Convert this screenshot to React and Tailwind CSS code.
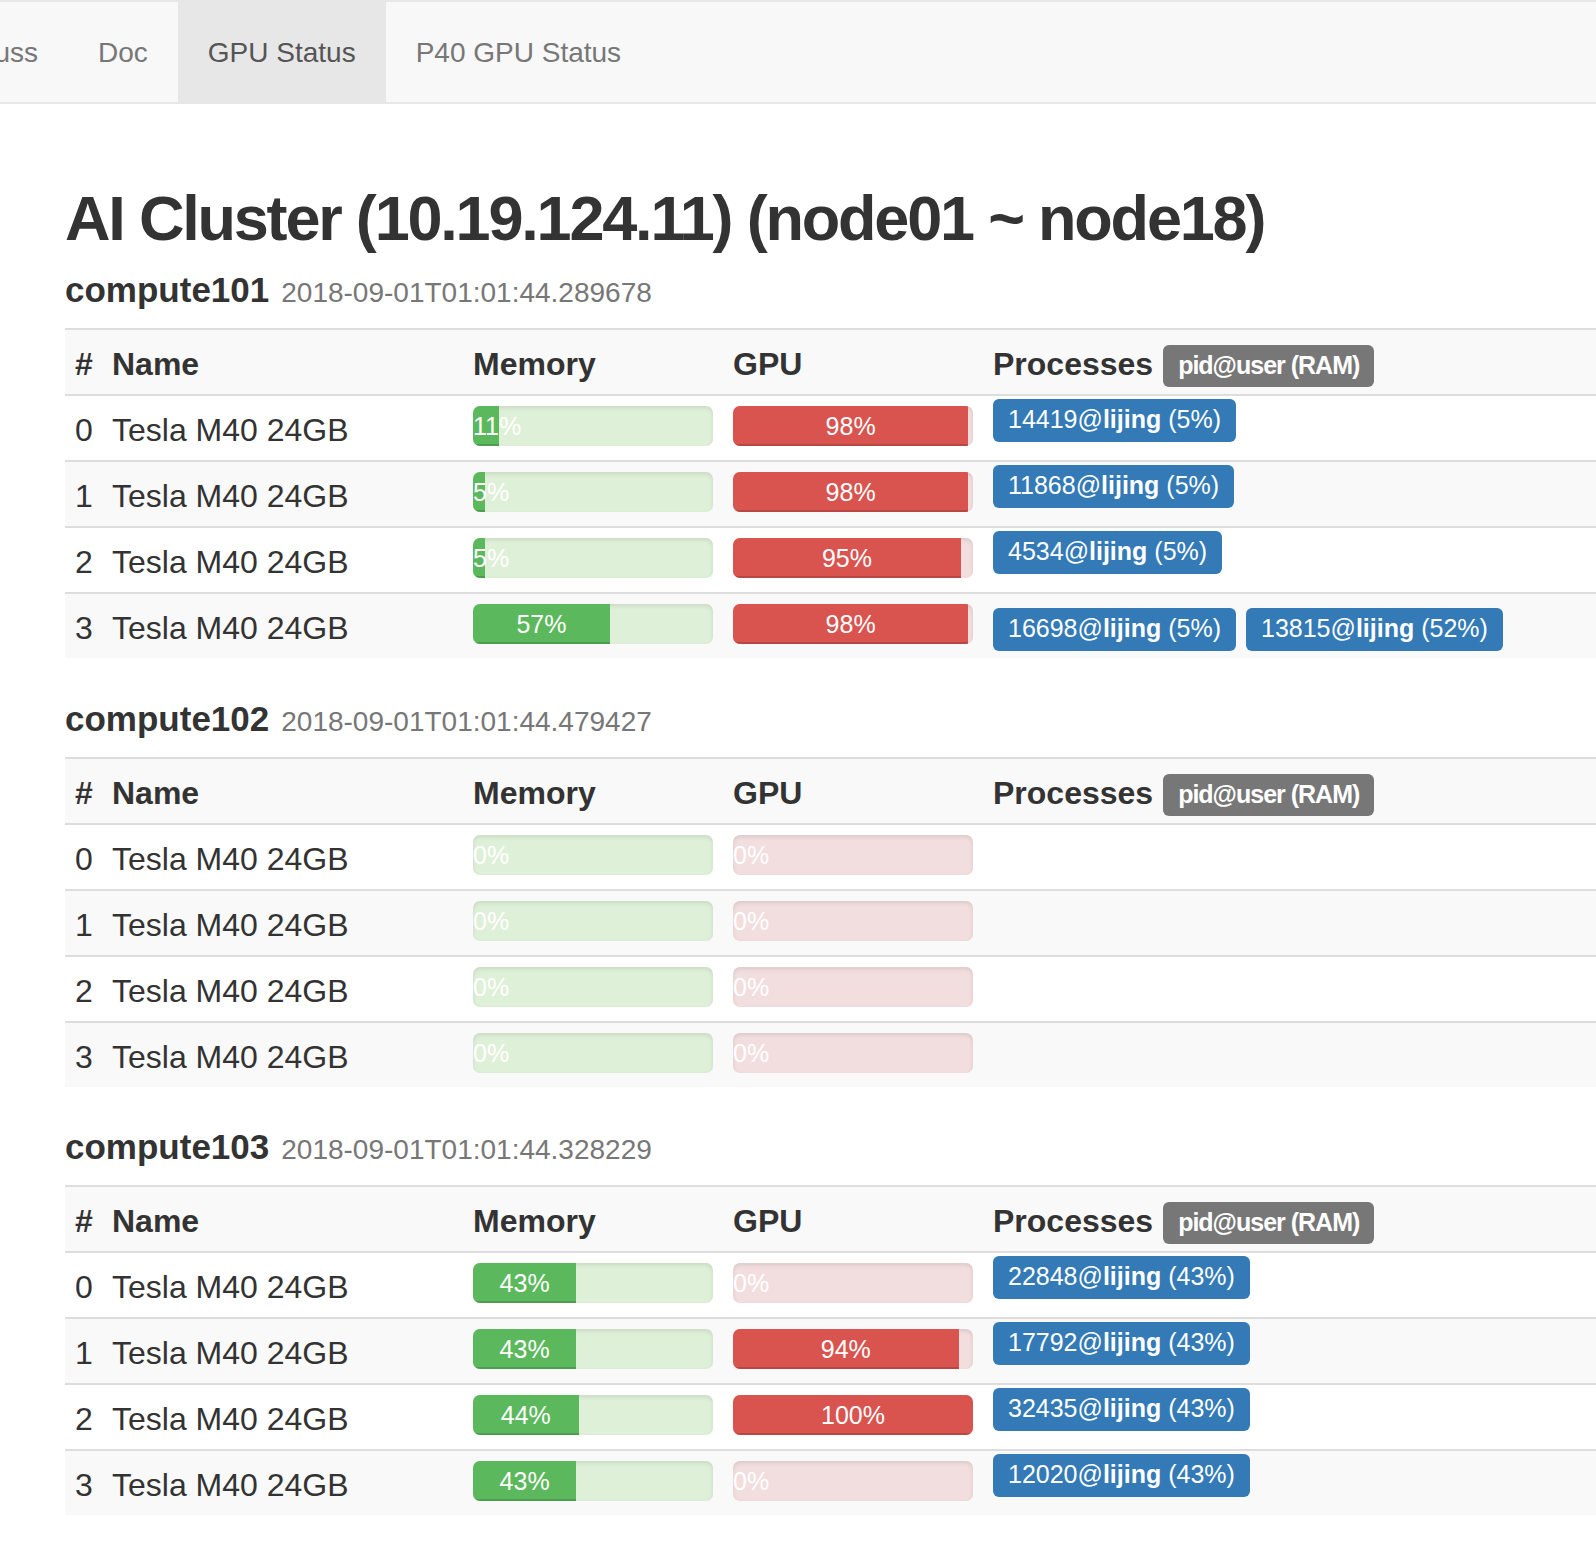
import React from "react";

const navItems = [
  { label: "Discuss", active: false },
  { label: "Doc", active: false },
  { label: "GPU Status", active: true },
  { label: "P40 GPU Status", active: false },
];

const sections = [
  {
    name: "compute101",
    time: "2018-09-01T01:01:44.289678",
    rows: [
      { mem: 11, gpu: 98, procs: [["14419", "lijing", "5%"]] },
      { mem: 5, gpu: 98, procs: [["11868", "lijing", "5%"]] },
      { mem: 5, gpu: 95, procs: [["4534", "lijing", "5%"]] },
      { mem: 57, gpu: 98, procs: [["16698", "lijing", "5%"], ["13815", "lijing", "52%"]] },
    ],
  },
  {
    name: "compute102",
    time: "2018-09-01T01:01:44.479427",
    rows: [
      { mem: 0, gpu: 0, procs: [] },
      { mem: 0, gpu: 0, procs: [] },
      { mem: 0, gpu: 0, procs: [] },
      { mem: 0, gpu: 0, procs: [] },
    ],
  },
  {
    name: "compute103",
    time: "2018-09-01T01:01:44.328229",
    rows: [
      { mem: 43, gpu: 0, procs: [["22848", "lijing", "43%"]] },
      { mem: 43, gpu: 94, procs: [["17792", "lijing", "43%"]] },
      { mem: 44, gpu: 100, procs: [["32435", "lijing", "43%"]] },
      { mem: 43, gpu: 0, procs: [["12020", "lijing", "43%"]] },
    ],
  },
];

function Bar({ value, kind }) {
  const track =
    kind === "mem"
      ? "h-[40px] rounded-[7px] overflow-hidden bg-[#dff0d8] shadow-[inset_0_2px_4px_rgba(0,0,0,0.1)]"
      : "h-[40px] rounded-[7px] overflow-hidden bg-[#f2dede] shadow-[inset_0_2px_4px_rgba(0,0,0,0.1)]";
  const fill =
    kind === "mem"
      ? "h-full bg-[#5cb85c] text-white text-[25px] leading-[40px] text-center whitespace-nowrap shadow-[inset_0_-2px_0_rgba(0,0,0,0.15)]"
      : "h-full bg-[#d9534f] text-white text-[25px] leading-[40px] text-center whitespace-nowrap shadow-[inset_0_-2px_0_rgba(0,0,0,0.15)]";
  return (
    <div className={track}>
      <div className={fill} style={{ width: `${value}%` }}>
        {value}%
      </div>
    </div>
  );
}

function ProcLabel({ pid, user, ram }) {
  return (
    <span className="inline-block h-[43px] leading-[41px] px-[15px] bg-[#337ab7] text-white text-[25px] rounded-[6px] whitespace-nowrap">
      {pid}@<b className="font-bold">{user}</b> ({ram})
    </span>
  );
}

const gridCols = "grid grid-cols-[37px_361px_260px_260px_1fr] border-t-2 border-[#ddd]";

function Section({ s, first }) {
  return (
    <div>
      <h3
        className={
          first
            ? "mt-[18.5px] h-[38.5px] leading-[38.5px] text-[35px] whitespace-nowrap"
            : "mt-[41.5px] h-[38.5px] leading-[38.5px] text-[35px] whitespace-nowrap"
        }
      >
        <span className="font-bold text-[#333]">{s.name}</span>
        <span className="ml-[12px] text-[28px] text-[#777]">{s.time}</span>
      </h3>
      <div className="mt-[18.5px] text-[32px] text-[#333]">
        <div className={`${gridCols} bg-[#f9f9f9] font-bold`}>
          <div className="h-[64px] px-[10px] pt-[12px] leading-[44px]">#</div>
          <div className="h-[64px] px-[10px] pt-[12px] leading-[44px]">Name</div>
          <div className="h-[64px] px-[10px] pt-[12px] leading-[44px]">Memory</div>
          <div className="h-[64px] px-[10px] pt-[12px] leading-[44px]">GPU</div>
          <div className="h-[64px] px-[10px] pt-[10px] flex items-start gap-[10px]">
            <span className="mt-[2px] leading-[44px]">Processes</span>
            <span className="mt-[5px] h-[42px] leading-[40px] px-[15px] bg-[#777] text-white text-[25px] font-bold rounded-[6px] tracking-[-1px] whitespace-nowrap">
              pid@user (RAM)
            </span>
          </div>
        </div>
        {s.rows.map((r, i) => (
          <div
            key={i}
            className={i % 2 === 1 ? `${gridCols} bg-[#f9f9f9]` : `${gridCols} bg-white`}
          >
            <div className="h-[64px] px-[10px] pt-[12px] leading-[44px]">{i}</div>
            <div className="h-[64px] px-[10px] pt-[12px] leading-[44px] whitespace-nowrap">Tesla M40 24GB</div>
            <div className="h-[64px] px-[10px] pt-[10px]">
              <Bar value={r.mem} kind="mem" />
            </div>
            <div className="h-[64px] px-[10px] pt-[10px]">
              <Bar value={r.gpu} kind="gpu" />
            </div>
            <div
              className={
                r.procs.length > 1
                  ? "h-[64px] px-[10px] pt-[14px] flex gap-[10px]"
                  : "h-[64px] px-[10px] pt-[3px] flex gap-[10px]"
              }
            >
              {r.procs.map((p, j) => (
                <ProcLabel key={j} pid={p[0]} user={p[1]} ram={p[2]} />
              ))}
            </div>
          </div>
        ))}
      </div>
    </div>
  );
}

export default function App() {
  return (
    <div className="min-h-[1546px] bg-white font-['Liberation_Sans',Arial,sans-serif] overflow-hidden">
      <div className="h-[104px] bg-[#f8f8f8] border-y-2 border-[#e7e7e7] overflow-hidden">
        <div className="flex h-[100px] ml-[-90px]">
          {navItems.map((n) =>
            n.active ? (
              <div key={n.label} className="px-[30px] pt-[2px] flex items-center text-[28px] bg-[#e7e7e7] text-[#555] whitespace-nowrap">
                {n.label}
              </div>
            ) : (
              <div key={n.label} className="px-[30px] pt-[2px] flex items-center text-[28px] text-[#777] whitespace-nowrap">
                {n.label}
              </div>
            )
          )}
        </div>
      </div>
      <div className="pl-[65px] pb-[40px]">
        <h1 className="mt-[79.5px] h-[69px] leading-[69px] text-[63px] font-bold tracking-[-2.2px] text-[#333] whitespace-nowrap">
          AI Cluster (10.19.124.11) (node01 ~ node18)
        </h1>
        {sections.map((s, i) => (
          <Section key={s.name} s={s} first={i === 0} />
        ))}
      </div>
    </div>
  );
}
